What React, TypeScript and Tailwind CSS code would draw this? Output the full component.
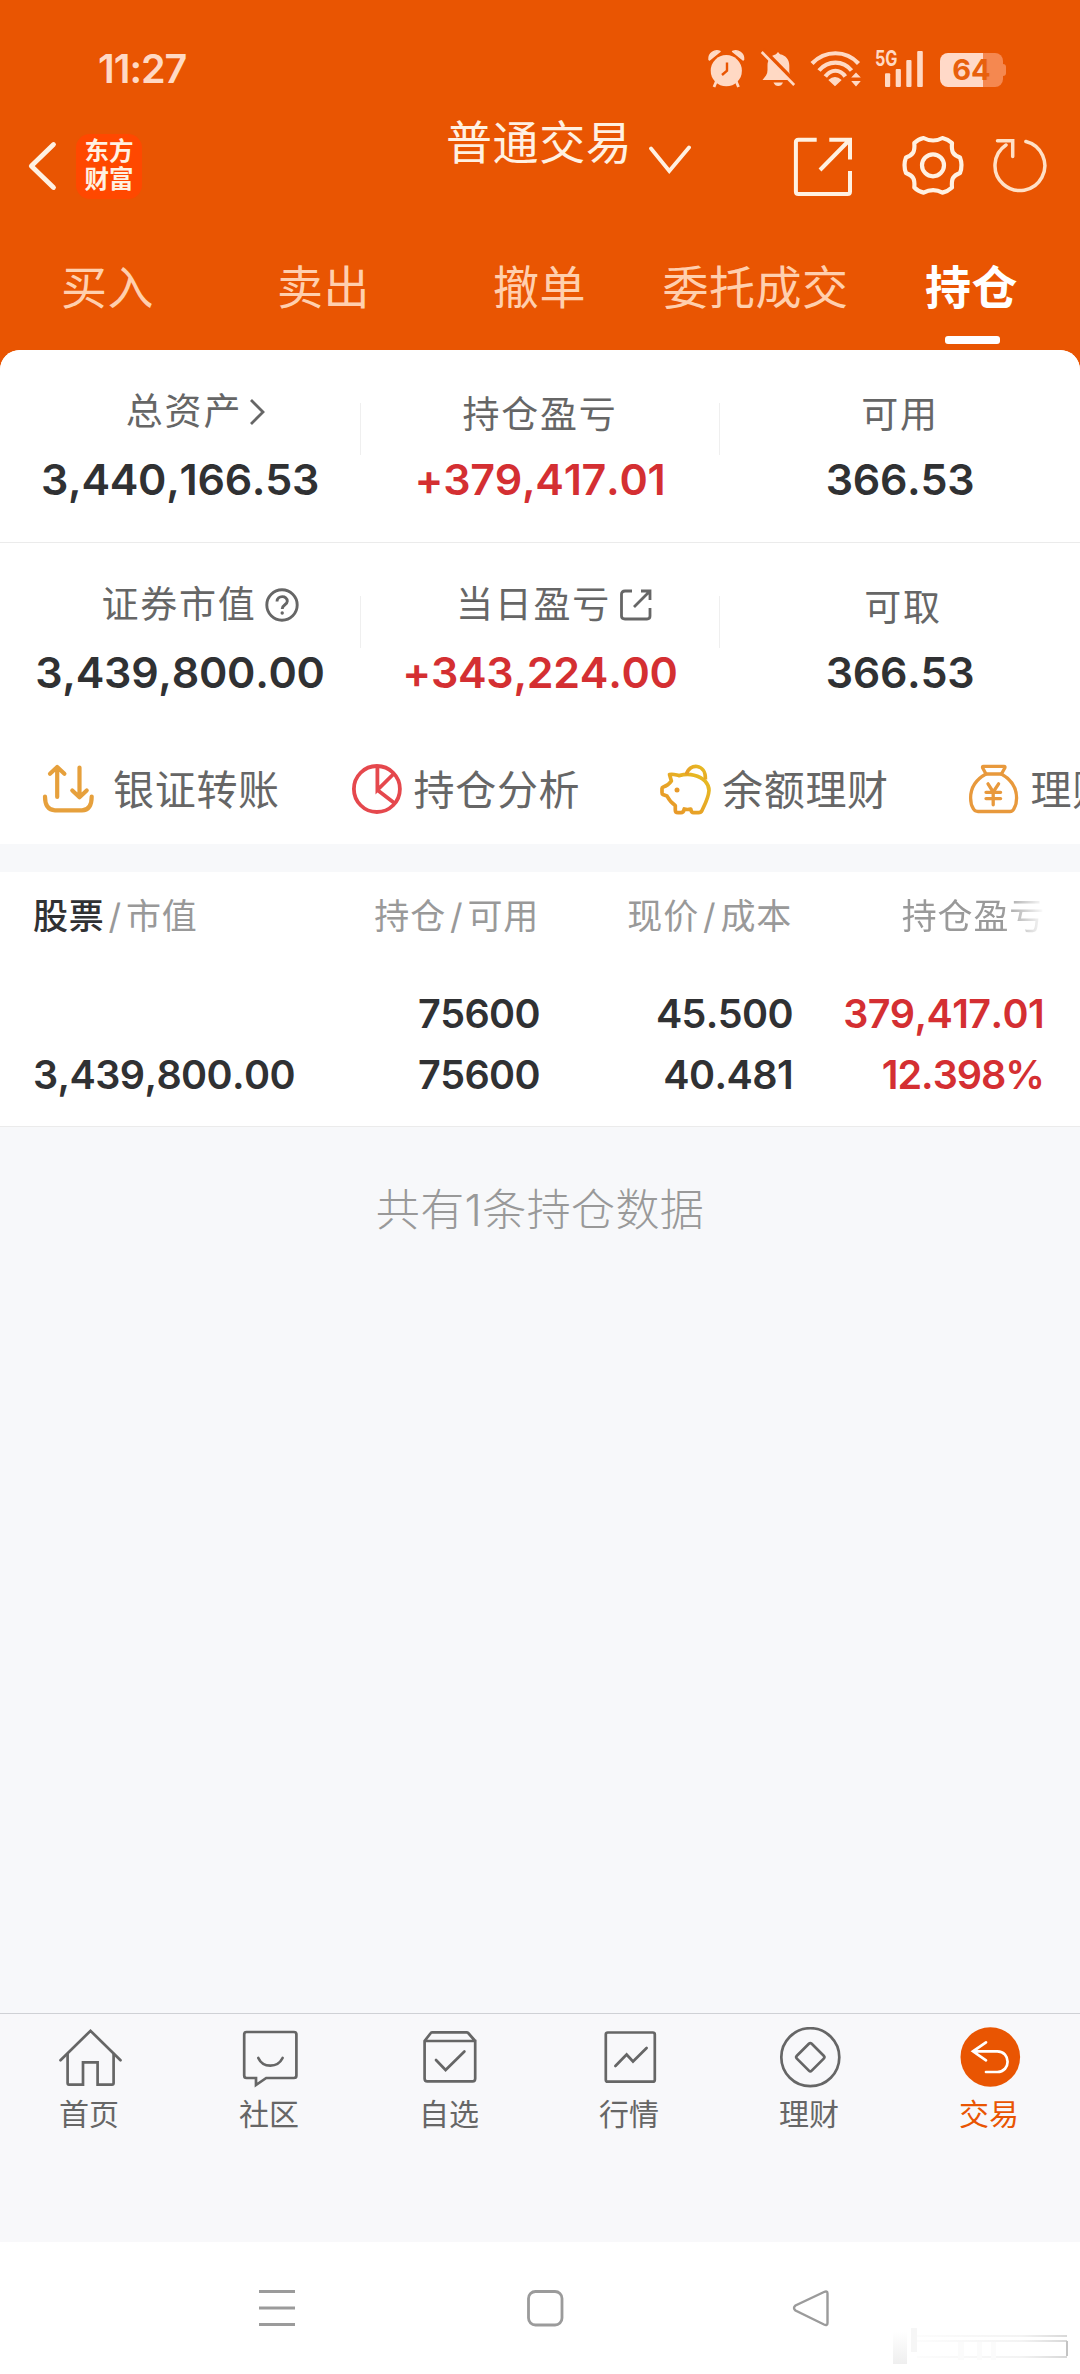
import React from 'react';
import clsx from 'clsx';

interface SummaryItem {
  label: string;
  value: string;
  icon?: React.ReactNode;
  up?: boolean;
  labelClass?: string;
}

const ChevronRight = () => (
  <svg width="18" height="28" viewBox="0 0 18 28" fill="none" stroke="#666" strokeWidth="2.8" className="ml-[6px]">
    <path d="M3 2 L15 14 L3 26" />
  </svg>
);

const HelpIcon = () => (
  <svg width="34" height="34" viewBox="0 0 34 34" fill="none" stroke="#666" strokeWidth="2.9" className="ml-[8px]">
    <circle cx="17" cy="17" r="15.2" />
    <path d="M12 13.5 C12 7 22.5 7 22.3 13.3 C22.2 17 17.2 16.6 17.2 21" />
    <circle cx="17.2" cy="25" r="1" fill="#666" strokeWidth="1.4" />
  </svg>
);

const ShareIcon = () => (
  <svg width="34" height="34" viewBox="0 0 34 34" fill="none" stroke="#666" strokeWidth="2.8" className="ml-[8px]">
    <path d="M13 3 H6 Q2.5 3 2.5 6 V28 Q2.5 31 6 31 H28 Q31 31 31 28 V20" />
    <path d="M22 3 H31 V12 M31 3 L15 19" />
  </svg>
);

const SUMMARY: SummaryItem[][] = [
  [
    { label: '总资产', value: '3,440,166.53', icon: <ChevronRight />, labelClass: 'pl-[32px]' },
    { label: '持仓盈亏', value: '+379,417.01', up: true, labelClass: 'pt-[3px]' },
    { label: '可用', value: '366.53', labelClass: 'pt-[3px]' },
  ],
  [
    { label: '证券市值', value: '3,439,800.00', icon: <HelpIcon />, labelClass: 'pl-[40px]' },
    { label: '当日盈亏', value: '+343,224.00', icon: <ShareIcon />, up: true, labelClass: 'pl-[29px]' },
    { label: '可取', value: '366.53', labelClass: 'pt-[3px] pl-[6px]' },
  ],
];

const TransferIcon = () => (
  <svg width="52" height="52" viewBox="0 0 52 52" fill="none" stroke="#e6a03c" strokeWidth="4.2" strokeLinecap="round" strokeLinejoin="round">
    <path d="M15.2 33 V3.5 M8 9.8 L15.2 3 L22.4 9.8" />
    <path d="M37.5 3.5 V33 M30.3 26.5 L37.5 33.2 L44.7 26.5" />
    <path d="M3 32.5 C3 41 6 46.3 13 46.3 H40 C46.5 46.3 49.7 41 49.7 32.5" />
  </svg>
);

const PieIcon = () => (
  <svg width="52" height="52" viewBox="0 0 52 52" fill="none" stroke="#e5484d" strokeWidth="3.8">
    <circle cx="25.9" cy="25" r="23" />
    <path d="M26.4 2 V26 L43 9.5 M26.4 26 L43.6 39.3" />
  </svg>
);

const PiggyIcon = () => (
  <svg width="52" height="52" viewBox="0 0 52 52" fill="none" stroke="url(#pig)" strokeWidth="3.7" strokeLinejoin="round">
    <defs>
      <linearGradient id="pig" x1="1" y1="0" x2="0" y2="1">
        <stop offset="0" stopColor="#e6bd22" />
        <stop offset="1" stopColor="#e8932a" />
      </linearGradient>
    </defs>
    <path d="M10.5 10.5 C14 9.5 17 11 20 11.6 C24 10.6 30 10 35 11.2 C45 13.5 50 20 50 26.5 C49.5 34 46 40 43 46.5 Q42 48.7 39.5 48.7 H34.5 Q32.3 48.7 31.8 45 Q28.5 46 25.2 45 Q24.6 48.7 22 48.7 H19 Q16.3 48.7 16.3 46 V41.5 C12.5 39 9.8 35.5 8 32 L3.8 30.5 Q3 30 3 28.5 V24.5 Q3 23.4 4.2 23 C7.5 22 10 20.5 12.4 17 Z" />
    <path d="M27.5 10.5 C30 -1 47 -1 46.4 15.5" />
    <circle cx="18" cy="26" r="2.5" fill="#e89a2a" stroke="none" />
  </svg>
);

const MoneyBagIcon = () => (
  <svg width="52" height="52" viewBox="0 0 52 52" fill="none" stroke="#e8993c" strokeWidth="3.3" strokeLinejoin="round" strokeLinecap="round">
    <path d="M15.5 2.3 H36 Q37.5 2.3 36.8 4 L33.4 10 H18 L14.7 4 Q14 2.3 15.5 2.3 Z" />
    <path d="M18 10 C7 16 2.6 24 2.6 34 C2.6 38 3.5 42 5.5 45 Q7 47.5 10 47.5 H42 Q44.5 47.5 45.8 45 C47.7 42 48.6 38 48.6 34 C48.6 24 44 16 33.4 10" />
    <path d="M20 19.8 L25.2 28 L30.6 19.8 M25.2 28 V40.8 M18 28.3 H32.6 M18 34.6 H32.6" />
  </svg>
);

const SHORTCUTS = [
  { label: '银证转账', icon: <TransferIcon />, gap: 'gap-[19px]' },
  { label: '持仓分析', icon: <PieIcon />, gap: 'gap-[11px]' },
  { label: '余额理财', icon: <PiggyIcon />, gap: 'gap-[11px]' },
  { label: '理财', icon: <MoneyBagIcon />, gap: 'gap-[11px]' },
];

const NAV = [
  {
    label: '首页',
    icon: (
      <>
        <path d="M2.5 33.3 L32.5 3.8 L62.5 33.3" />
        <path d="M9.6 27 V56 Q9.6 57.7 11 57.7 H25 V35.3 H39.6 V57.7 H54 Q55.6 57.7 55.6 56 V27" />
      </>
    ),
  },
  {
    label: '社区',
    icon: (
      <>
        <path d="M8.5 5 H56 Q58.4 5 58.4 7.5 V48.5 Q58.4 51 56 51 H28.2 L18 58 V51 H8.5 Q6.2 51 6.2 48.5 V7.5 Q6.2 5 8.5 5 Z" />
        <path d="M20.3 31 C25 41.2 39.5 41.2 44.6 31" />
      </>
    ),
  },
  {
    label: '自选',
    icon: (
      <>
        <path d="M6.6 14 H57.2 V51.5 Q57.2 54.4 54.5 54.4 H9.3 Q6.6 54.4 6.6 51.5 V14 L12.8 6 Q13.3 5.3 14.5 5.3 H48.5 Q49.6 5.3 50.2 6 L57.2 14" />
        <path d="M18 33 L27.6 43 L46.4 24.5" />
      </>
    ),
  },
  {
    label: '行情',
    icon: (
      <>
        <rect x="7.8" y="5.5" width="49" height="49.2" rx="2" />
        <path d="M17.4 39 L28.6 27.5 L35 34.5 L48.6 21" />
      </>
    ),
  },
  {
    label: '理财',
    icon: (
      <>
        <circle cx="32.3" cy="30.2" r="29" />
        <rect x="21.8" y="19.7" width="21" height="21" rx="2" transform="rotate(45 32.3 30.2)" />
      </>
    ),
  },
  {
    label: '交易',
    active: true,
    icon: (
      <>
        <circle cx="32.3" cy="30" r="29.8" fill="#e95502" stroke="none" />
        <path d="M28 15.3 L15 24.3 L28 33.3 M15 24.3 H39.3 C53 24.3 53 45 39.3 45 H28" stroke="#fff" />
      </>
    ),
  },
];

const StatusBar = () => (
  <div className="flex h-[112px] items-center pt-[26px] pl-[98px] text-[#ffd9c4]">
    <span className="w-[608px] text-[39.5px] leading-[40px] font-semibold tracking-[-1px]">11:27</span>
    <svg width="52" height="40" viewBox="0 0 52 40" className="-mt-[2px]" fill="currentColor">
      <circle cx="20.3" cy="22.7" r="15.6" />
      <path d="M3 11.5 A8 8 0 0 1 14 3.5 L3.5 12 Z M37.6 11.5 A8 8 0 0 0 26.6 3.5 L37.1 12 Z" stroke="currentColor" strokeWidth="1.5" strokeLinejoin="round" />
      <path d="M10.5 33 L8 39 M30 33 L32.5 39" stroke="currentColor" strokeWidth="2.8" />
      <path d="M21 14.5 V22.7 L16 27" fill="none" stroke="#e95502" strokeWidth="2.4" />
    </svg>
    <svg width="50" height="40" viewBox="0 0 50 40" className="-mt-[2px]" fill="currentColor">
      <path d="M20 4 L22 6.2 C28 7.3 31.3 12 31.3 17.5 V24 Q31.5 26.5 34 29 L36.5 32 H4.5 L8 27.5 Q9.5 25.5 9.5 22 V17.5 C9.5 12 12.5 7.5 18 6.2 Z" />
      <path d="M15.5 34.5 H25 Q23.5 38 20.2 38 Q17 38 15.5 34.5 Z" />
      <path d="M5 1.5 L39 36" stroke="#e95502" strokeWidth="4" />
      <path d="M3.7 4 L36.2 37" stroke="currentColor" strokeWidth="2.6" />
    </svg>
    <svg width="66" height="40" viewBox="0 0 66 40" className="-mt-[2px]" fill="none" stroke="currentColor" strokeWidth="4.2">
      <path d="M4 15.5 C17 1.8 38 1.8 50.5 15.5 M11 22.5 C20 12 35 12 43.5 22.5 M17.3 28.5 C23 20.8 32 20.8 37.3 28.5" />
      <path d="M20.3 32 Q27 26 33.7 32 L27 38.2 Z M48 24.5 L52.8 29.5 H43.2 Z M48 38.5 L52.8 33 H43.2 Z" fill="currentColor" stroke="none" />
    </svg>
    <svg width="66" height="40" viewBox="0 0 66 40" className="-mt-[2px] overflow-visible" fill="currentColor">
      <text x="1" y="18" fontSize="21" fontWeight="700" textLength="22.5" lengthAdjust="spacingAndGlyphs">5G</text>
      <rect x="11" y="25.3" width="5.2" height="13.7" rx="1" />
      <rect x="21.7" y="21" width="5.2" height="18" rx="1" />
      <rect x="32.3" y="12" width="5.2" height="27" rx="1" />
      <rect x="43.2" y="3" width="5.6" height="36" rx="1" />
    </svg>
    <div className="mt-[2px] flex items-center">
      <div className="flex h-[34px] w-[63px] items-center justify-center rounded-[8px] bg-[linear-gradient(to_right,#ffd9c8_68%,#f58850_68%)] text-[29px] leading-[34px] font-bold text-[#e8600c]">
        64
      </div>
      <div className="h-[12px] w-[3px] rounded-r-[3px] bg-[#f58850]" />
    </div>
  </div>
);

const TitleBar = () => (
  <div className="flex h-[108px] items-center pl-[26px] text-[#fff1e2]">
    <svg width="32" height="52" viewBox="0 0 32 52" fill="none" stroke="currentColor" strokeWidth="4.8" strokeLinecap="round" strokeLinejoin="round">
      <path d="M27.5 4.5 L5.3 26 L27.5 47.5" />
    </svg>
    <div className="ml-[18px] flex h-[65px] w-[66px] items-center justify-center rounded-[14px] bg-[#ff4800] pb-[2px] text-center text-[24.5px] leading-[28px] font-bold">
      <span>
        东方
        <br />
        财富
      </span>
    </div>
    <div className="-mt-[4px] ml-[304px] flex w-[346px] items-center self-start">
      <span className="text-[46px] leading-[61px] tracking-[0.6px]">普通交易</span>
      <svg width="44" height="32" viewBox="0 0 44 32" className="mt-[36px] ml-[15px]" fill="none" stroke="currentColor" strokeWidth="3.8" strokeLinecap="round">
        <path d="M4 4.5 L22.3 27 L42 3.5" />
      </svg>
    </div>
    <svg width="64" height="64" viewBox="0 0 64 64" fill="none" stroke="currentColor" strokeWidth="4">
      <path d="M24.7 5.7 H6.5 Q3.9 5.7 3.9 8.2 V57.5 Q3.9 60 6.5 60 H55.5 Q58 60 58 57.5 V37" />
      <path d="M37.3 5.7 H58 V25.5 M28 36 L57.5 6" />
    </svg>
    <svg width="66" height="64" viewBox="0 0 66 64" className="ml-[44px]" fill="none" stroke="currentColor" strokeWidth="4.2" strokeLinejoin="round">
      <path d="M23.5 4 Q33.2 9 42.5 4 Q48 5.2 52 9 C51.2 18 53 20.8 60 23.5 Q63 31.3 60 39 C53 41.7 51.2 44.5 52 53.5 Q48 57.3 42.5 58.6 Q33.2 53.6 23.5 58.6 Q18 57.3 14.3 53.5 C15.1 44.5 13 41.7 6 39 Q3 31.3 6 23.5 C13 20.8 15.1 18 14.3 9 Q18 5.2 23.5 4 Z" />
      <circle cx="33" cy="31.3" r="11" />
    </svg>
    <svg width="60" height="64" viewBox="0 0 60 64" className="ml-[24px] text-[#ffe0c6]" fill="none" stroke="currentColor" strokeWidth="3.5" strokeLinecap="round">
      <path d="M35.9 7.5 A24.9 24.9 0 1 1 16 11" />
      <path d="M7.5 6.8 H22.7 V22.5" />
    </svg>
  </div>
);

const TABS = ['买入', '卖出', '撤单', '委托成交', '持仓'];

const Tabs = () => (
  <div className="grid h-[130px] grid-cols-5 pt-[42px]">
    {TABS.map((tab) => {
      const active = tab === '持仓';
      return (
        <div key={tab} className="flex flex-col items-center">
          <span className={clsx('-ml-px text-[46px] leading-[50px] tracking-[0.5px]', active ? 'font-bold text-white' : 'text-[#ffcfae]')}>{tab}</span>
          {active && <div className="mt-[24px] h-[8px] w-[55px] rounded-[3px] bg-white" />}
        </div>
      );
    })}
  </div>
);

const SummaryCell: React.FC<SummaryItem> = ({ label, value, icon, up, labelClass }) => (
  <div className="flex flex-col items-center pt-[42px]">
    <div className={clsx('flex h-[62px] items-start text-[#666]', labelClass)}>
      <div className="flex h-[40px] items-center">
        <span className="text-[37px] leading-[40px] tracking-[1.8px]">{label}</span>
        {icon}
      </div>
    </div>
    <div className={clsx('text-[43px] leading-[50px] font-semibold tracking-[-0.3px] [font-kerning:none]', up ? 'text-[#d42f32]' : 'text-[#303133]')}>
      {value}
    </div>
  </div>
);

const Divider = () => <div className="mt-[53px] h-[52px] bg-[#efefef]" />;

export default function App() {
  return (
    <div className="flex h-[2374px] w-[1080px] flex-col overflow-hidden bg-[#f7f8fa] font-['Inter','Noto_Sans_CJK_SC',sans-serif]">
      <header className="bg-[#e95502]">
        <StatusBar />
        <TitleBar />
        <Tabs />
        <div className="h-[20px] rounded-t-[20px] bg-white" />
      </header>

      <section className="-mt-[20px]">
        {SUMMARY.map((row, i) => (
          <div
            key={i}
            className={clsx('grid h-[192px] grid-cols-[360px_1px_358px_1px_360px] bg-white', i === 0 ? 'rounded-t-[20px]' : 'border-t border-[#ebebeb]')}
          >
            <SummaryCell {...row[0]} />
            <Divider />
            <SummaryCell {...row[1]} />
            <Divider />
            <SummaryCell {...row[2]} />
          </div>
        ))}
        <div className="flex h-[110px] overflow-hidden bg-white pt-[2px] pl-[42px]">
          {SHORTCUTS.map((item, i) => (
            <div key={i} className={clsx('flex w-[308.5px] shrink-0 items-center', item.gap)}>
              {item.icon}
              <span className="shrink-0 text-[41px] leading-[50px] tracking-[0.7px] whitespace-nowrap text-[#666]">{item.label}</span>
            </div>
          ))}
        </div>
      </section>

      <section className="mt-[28px] h-[255px] border-b border-[#ebebeb] bg-white pl-[33px]">
        <div className="grid h-[88px] grid-cols-[284px_222px_253px_253px] items-center text-[35px] leading-[40px] tracking-[0.8px] text-[#999]">
          <div>
            <span className="font-medium text-[#303133]">股票</span>
            <span className="mx-[4px]">/</span>市值
          </div>
          <div className="text-right">
            持仓<span className="mx-[4px]">/</span>可用
          </div>
          <div className="text-right">
            现价<span className="mx-[4px]">/</span>成本
          </div>
          <div className="text-right [mask-image:linear-gradient(to_right,black_83%,transparent)]">持仓盈亏</div>
        </div>
        <div className="grid grid-cols-[284px_223px_253px_251px] pt-[24px] text-[39.5px] leading-[61px] font-semibold tracking-[-0.6px] text-[#303133] [font-kerning:none]">
          <div />
          <div className="text-right">75600</div>
          <div className="text-right">45.500</div>
          <div className="text-right text-[#d42f32]">379,417.01</div>
          <div>3,439,800.00</div>
          <div className="text-right">75600</div>
          <div className="text-right">40.481</div>
          <div className="text-right tracking-[-1px] text-[#d42f32]">12.398%</div>
        </div>
      </section>

      <main className="flex-1 pt-[58px] text-center text-[44px] leading-[50px] font-light tracking-[0.4px] text-[#999]">共有1条持仓数据</main>

      <nav className="grid h-[229px] grid-cols-6 border-t border-[#cfd1d5] bg-[#f8f8fa] pt-[13px]">
        {NAV.map((item) => (
          <div key={item.label} className="flex flex-col items-center">
            <svg width="64" height="64" viewBox="0 0 64 64" fill="none" stroke="#666" strokeWidth="2.7" strokeLinecap="round">
              {item.icon}
            </svg>
            <span className={clsx('mt-[3px] mr-[2px] text-[30px] leading-[40px]', item.active ? 'text-[#e95502]' : 'text-[#666]')}>{item.label}</span>
          </div>
        ))}
      </nav>

      <footer className="h-[132px] bg-white">
        <svg width="1080" height="132" viewBox="0 0 1080 132" fill="none" stroke="#9b9b9b" strokeWidth="2.8">
          <defs>
            <linearGradient id="smudge" x1="0" y1="0" x2="1" y2="0">
              <stop offset="0" stopColor="#fcfcfc" />
              <stop offset="0.7" stopColor="#f3f3f3" />
              <stop offset="1" stopColor="#d8d8d8" />
            </linearGradient>
            <linearGradient id="fade" x1="0" y1="0" x2="0" y2="1">
              <stop offset="0" stopColor="#fff" />
              <stop offset="1" stopColor="#efefef" />
            </linearGradient>
          </defs>
          <path d="M259 49.5 H295 M259 66 H295 M259 82.5 H295" />
          <rect x="528.5" y="49.5" width="33.5" height="33.5" rx="7" />
          <path d="M824 50 L795.5 63.5 Q792.5 66 795.5 68.5 L824 82.5 Q827.5 84 827.5 81 V51.5 Q827.5 48.5 824 50 Z" strokeWidth="2.4" />
          <g stroke="none">
            <rect x="893" y="90" width="14" height="32" fill="url(#fade)" />
            <rect x="911" y="86" width="6" height="24" fill="#f6f6f6" />
            <rect x="917" y="93" width="150" height="2" fill="url(#smudge)" />
            <rect x="917" y="98" width="150" height="2" fill="url(#smudge)" />
            <rect x="917" y="114" width="150" height="2" fill="url(#smudge)" />
            <rect x="958" y="100" width="6" height="18" fill="#fbfbfb" />
            <rect x="977" y="100" width="5" height="18" fill="#fbfbfb" />
            <rect x="991" y="100" width="5" height="18" fill="#fbfbfb" />
            <rect x="1066" y="99" width="2" height="15" fill="#c4c4c4" />
          </g>
        </svg>
      </footer>
    </div>
  );
}
